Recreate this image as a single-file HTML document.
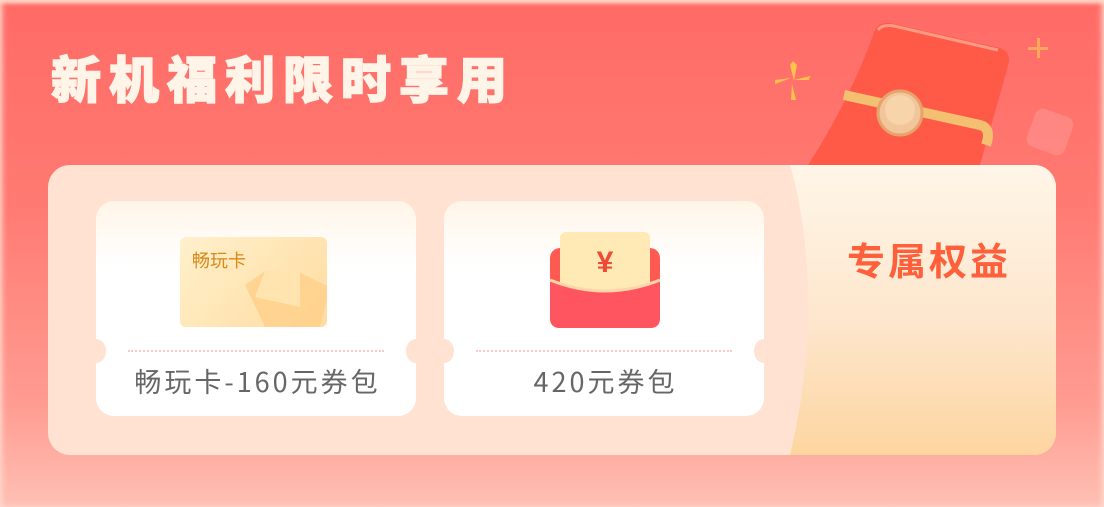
<!DOCTYPE html>
<html><head><meta charset="utf-8"><style>
*{margin:0;padding:0;box-sizing:border-box}
body{width:1104px;height:507px;overflow:hidden;position:relative;font-family:"Liberation Sans","Noto Sans CJK SC",sans-serif;
background:linear-gradient(180deg,#ff6b66 0%,#ff7a72 40%,#ff9c92 80%,#ffc0b4 100%);}
.edge{position:absolute;inset:0;box-shadow:inset 0 3px 4px #ffd8c8,inset 3px 0 6px rgba(255,220,210,.6),inset -3px 0 6px rgba(255,220,210,.6);}
.title{position:absolute;left:51px;top:50px;font-size:50px;font-weight:900;color:#fff4e8;letter-spacing:8px;line-height:62px;-webkit-text-stroke:1.5px #fff4e8}
.panel{position:absolute;left:48px;top:165px;width:1008px;height:290px;border-radius:22px;background:#ffe2d2;overflow:hidden}
.right{position:absolute;left:742px;top:0;width:266px;height:290px;background:linear-gradient(180deg,#fff6e8,#fde6cc 55%,#fdd5a0);clip-path:path('M0 0 L266 0 L266 290 L0 290 C22 200 26 90 0 0 Z')}
.rtxt{position:absolute;left:847px;top:231px;font-size:38px;color:#ff5f3a;font-weight:bold;letter-spacing:3px;font-family:"Noto Sans CJK SC",sans-serif}
.card{position:absolute;top:201px;width:320px;height:215px;border-radius:18px;background:linear-gradient(180deg,#fff5e8 0%,#fff 30%,#fff 100%)}
.notch{position:absolute;top:339px;width:20px;height:24px;border-radius:50%;background:#ffe2d2}
.dots{position:absolute;top:350px;height:0;border-top:2px dotted #ffc8c2;width:256px}
.lbl{position:absolute;top:361px;width:320px;text-align:center;font-size:27px;line-height:40px;color:#666;letter-spacing:3px;text-indent:3px;font-family:"Noto Sans CJK SC",sans-serif}
</style></head><body>
<div class="edge"></div>
<div class="title">新机福利限时享用</div>
<svg style="position:absolute;left:760px;top:0" width="344" height="170">
<g fill="#ffc24a"><path d="M30 65 l3 -4 4 4 -3 16z"/><path d="M31 78 l-16 6 0 -4z"/><path d="M34 80 l16 -4 -1 4z"/><path d="M32 84 l4 16 -5 0z"/></g>
<g fill="#ffb65a" opacity=".8"><rect x="277" y="38" width="3" height="20"/><rect x="268" y="47" width="20" height="3"/></g>
<path d="M115 30 Q120 20 135 24 L240 48 Q252 52 248 66 L220 165 L48 165 Q90 100 115 30Z" fill="#ff5a48"/>
<path d="M118 30 Q122 24 134 26 L238 50" stroke="#ff9a84" stroke-width="3" fill="none"/>
<path d="M84 95 L220 125 Q232 128 226 145" stroke="#f2c070" stroke-width="10" fill="none"/>
<circle cx="140" cy="113" r="22" fill="#f3c59b" stroke="#e6a46d" stroke-width="3"/>
<circle cx="140" cy="110" r="15" fill="#f7d4aa"/>
<rect x="270" y="112" width="40" height="40" rx="8" fill="#ff9a98" opacity=".5" transform="rotate(20 290 132)"/>
</svg>
<div class="panel"><div class="right"></div></div>
<div class="rtxt">专属权益</div>
<div class="card" style="left:96px"></div>
<div class="card" style="left:444px"></div>
<div class="notch" style="left:86px"></div><div class="notch" style="left:406px"></div>
<div class="notch" style="left:434px"></div><div class="notch" style="left:754px"></div>
<div class="dots" style="left:128px"></div><div class="dots" style="left:476px"></div>
<div class="lbl" style="left:96px">畅玩卡-160元券包</div>
<div class="lbl" style="left:444px">420元券包</div>
<div style="position:absolute;left:180px;top:237px;width:147px;height:90px;border-radius:6px;background:linear-gradient(135deg,#fff0cc,#ffdca0);overflow:hidden">
<div style="position:absolute;left:12px;top:10px;font-size:18px;color:#d9881a;font-family:'Noto Sans CJK SC',sans-serif">畅玩卡</div>
<svg style="position:absolute;left:60px;top:30px" width="90" height="60"><path d="M5 18 L25 4 L60 6 L90 20 L80 60 L25 60Z" fill="#ffd08a" opacity=".8"/><path d="M25 4 L15 30 L60 40 L60 6Z" fill="#ffe4b0"/></svg>
</div>
<svg style="position:absolute;left:548px;top:232px" width="114" height="98">
<rect x="2" y="16" width="110" height="80" rx="10" fill="#ff5a52"/>
<rect x="12" y="0" width="90" height="70" rx="6" fill="#ffe9b4"/>
<text x="57" y="40" text-anchor="middle" font-size="30" font-weight="bold" fill="#ee4a36" font-family="Liberation Sans">¥</text>
<path d="M2 48 Q57 70 112 48 L112 86 Q112 96 102 96 L12 96 Q2 96 2 86Z" fill="#ff5560"/>
<path d="M2 48 Q57 70 112 48" stroke="#ffd6a8" stroke-width="3" fill="none"/>
</svg>
</body></html>
